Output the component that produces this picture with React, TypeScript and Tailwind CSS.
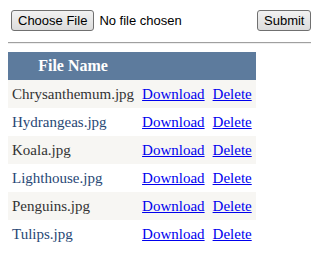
import React from "react";

const files = [
  "Chrysanthemum.jpg",
  "Hydrangeas.jpg",
  "Koala.jpg",
  "Lighthouse.jpg",
  "Penguins.jpg",
  "Tulips.jpg",
];

const btn =
  "h-[21px] rounded-[3px] border border-[#707070] bg-gradient-to-b from-[#f2f2f2] to-[#dcdcdc] px-[6px] text-[13px] leading-none text-black font-['Liberation_Sans',Arial,sans-serif]";

export default function App() {
  return (
    <div className="w-[311px] h-[257px] bg-white overflow-hidden pl-[8px] pt-[10px]">
      <div className="flex items-center w-[360px] font-['Liberation_Sans',Arial,sans-serif] text-[13px]">
        <div className="flex items-center w-[249px] pl-[3px]">
          <button className={btn}>Choose File</button>
          <span className="ml-[5px] text-black">No file chosen</span>
        </div>
        <button className={btn}>Submit</button>
      </div>
      <div className="mt-[11px] h-[2px] border-t border-[#a0a0a0] border-b border-b-[#eeeeee] w-[320px]" />
      <table className="mt-[8px] border-collapse font-['Liberation_Serif','Times_New_Roman',serif] text-[15px]">
        <thead>
          <tr className="bg-[#5D7B9D] text-white h-[28px]">
            <th className="px-[4px] font-bold text-center text-[16px]">File Name</th>
            <th className="px-[4px]"></th>
            <th className="px-[4px]"></th>
          </tr>
        </thead>
        <tbody>
          {files.map((f, i) => (
            <tr
              key={f}
              className={
                i % 2 === 0
                  ? "bg-[#F7F6F3] text-[#333333] h-[28px]"
                  : "bg-white text-[#284775] h-[28px]"
              }
            >
              <td className="px-[4px] whitespace-nowrap">{f}</td>
              <td className="px-[4px]">
                <a href="#" className="text-[#0000EE] underline">
                  Download
                </a>
              </td>
              <td className="px-[4px]">
                <a href="#" className="text-[#0000EE] underline">
                  Delete
                </a>
              </td>
            </tr>
          ))}
        </tbody>
      </table>
    </div>
  );
}
